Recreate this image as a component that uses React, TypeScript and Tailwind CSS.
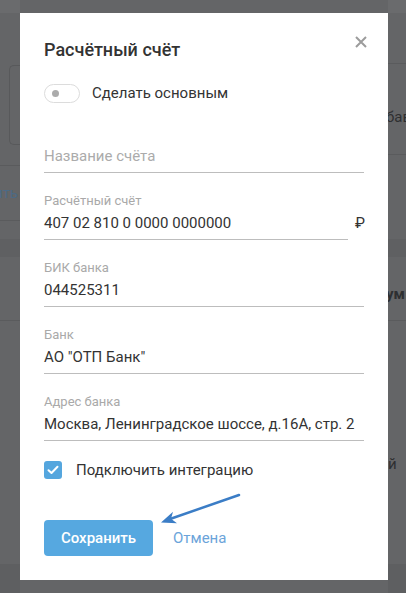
import React from "react";

function Field({ label, value }: { label: string; value: string }) {
  return (
    <div className="mt-[20px] border-b border-[#bdbdbd] pb-[6px]">
      <div className="text-[13px] leading-[16px] text-[#a9a9a9]">{label}</div>
      <div className="mt-[4px] text-[15px] leading-[20px] text-[#333333] whitespace-nowrap">{value}</div>
    </div>
  );
}

export default function App() {
  return (
    <div
      className="relative w-[406px] h-[593px] overflow-hidden bg-[#646567]"
      style={{ fontFamily: "Roboto, 'Noto Sans', Arial, sans-serif" }}
    >
      {/* background page (dimmed) */}
      <div className="flex h-full">
        <div className="w-[20px] flex flex-col overflow-hidden">
          <div className="h-[13px] bg-[#6a6b6d] shrink-0" />
          <div className="h-[52px] shrink-0" />
          <div className="ml-[9px] h-[80px] shrink-0 rounded-l-[5px] border border-r-0 border-[#58595b]" />
          <div className="h-[21px] shrink-0 border-b border-[#5a5b5d]" />
          <div className="h-[55px] shrink-0 border-b border-[#5a5b5d] flex items-center justify-end">
            <span className="text-[15px] text-[#4c6a85] whitespace-nowrap pr-[2px]">ить</span>
          </div>
          <div className="h-[18px] shrink-0" />
          <div className="h-[18px] shrink-0 bg-[#5f6062]" />
          <div className="h-[64px] shrink-0 border-b border-[#5a5b5d]" />
          <div className="flex-1" />
          <div className="h-[29px] shrink-0 bg-[#5e5f61]" />
        </div>
        <div className="flex-1" />
        <div className="w-[18px] flex flex-col overflow-hidden">
          <div className="h-[13px] bg-[#6a6b6d] shrink-0" />
          <div className="h-[51px] shrink-0 border-b border-[#5a5b5d]" />
          <div className="h-[91px] shrink-0 border-b border-[#5a5b5d] pt-[43px]">
            <span className="ml-[-2px] block text-[15px] leading-[20px] text-[#2e2f31] whitespace-nowrap">бав</span>
          </div>
          <div className="h-[84px] shrink-0" />
          <div className="h-[18px] shrink-0 bg-[#5f6062]" />
          <div className="h-[64px] shrink-0 border-b border-[#5a5b5d] pt-[27px]">
            <span className="ml-[-2px] block text-[15px] leading-[20px] font-bold text-[#2e2f31] whitespace-nowrap">ум</span>
          </div>
          <div className="h-[133px] shrink-0" />
          <div className="h-[20px] shrink-0">
            <span className="block text-[15px] leading-[20px] text-[#2e2f31]">й</span>
          </div>
          <div className="flex-1" />
          <div className="h-[29px] shrink-0 bg-[#5e5f61]" />
        </div>
      </div>

      {/* modal */}
      <div className="absolute left-[20px] top-[13px] w-[368px] h-[567px] bg-white px-[24px] pt-[25px]">
        <div className="text-[18px] leading-[24px] font-medium text-[#333333]">Расчётный счёт</div>
        <button className="absolute right-[21px] top-[23px] w-[12px] h-[12px]" aria-label="close">
          <svg width="12" height="12" viewBox="0 0 12 12">
            <path d="M1 1L11 11M11 1L1 11" stroke="#9c9c9c" strokeWidth="2" />
          </svg>
        </button>

        <div className="mt-[21px] h-[20px] flex items-center gap-[12px]">
          <div className="relative w-[36px] h-[19px] rounded-full border border-[#dcdcdc] bg-white">
            <div className="absolute left-[7px] top-[5px] w-[7px] h-[7px] rounded-full bg-[#ababab]" />
          </div>
          <span className="text-[15px] leading-[20px] text-[#333333]">Сделать основным</span>
        </div>

        <div className="mt-[43px] border-b border-[#bdbdbd] pb-[6px]">
          <div className="text-[15px] leading-[20px] text-[#ababab]">Название счёта</div>
        </div>

        <div className="flex">
          <div className="flex-1">
            <Field label="Расчётный счёт" value="407 02 810 0 0000 0000000" />
          </div>
          <div className="w-[16px] pt-[40px] pl-[7px] text-[15px] leading-[20px] text-[#333333]">₽</div>
        </div>
        <Field label="БИК банка" value="044525311" />
        <Field label="Банк" value={'АО "ОТП Банк"'} />
        <Field label="Адрес банка" value="Москва, Ленинградское шоссе, д.16А, стр. 2" />

        <div className="mt-[20px] h-[18px] flex items-center gap-[14px]">
          <div className="w-[18px] h-[18px] rounded-[3px] bg-[#55a6de] flex items-center justify-center">
            <svg width="12" height="10" viewBox="0 0 12 10">
              <path d="M1.5 5.2L4.5 8L10.5 1.8" stroke="white" strokeWidth="2" fill="none" strokeLinecap="round" strokeLinejoin="round" />
            </svg>
          </div>
          <span className="text-[15px] leading-[20px] text-[#333333]">Подключить интеграцию</span>
        </div>

        <div className="mt-[41px] flex items-center gap-[20px]">
          <button className="w-[109px] h-[36px] rounded-[4px] bg-[#56a8e0] text-white text-[15px] font-medium">
            Сохранить
          </button>
          <span className="text-[15px] leading-[20px] text-[#6ba4da]">Отмена</span>
        </div>
      </div>

      {/* annotation arrow */}
      <svg className="absolute left-0 top-0 pointer-events-none" width="406" height="593" viewBox="0 0 406 593">
        <line x1="239" y1="495" x2="170" y2="519" stroke="#3b7dc6" strokeWidth="2.5" strokeLinecap="round" />
        <polygon points="161,522.5 173,511.8 171,518.8 177,523.2" fill="#3b7dc6" />
      </svg>
    </div>
  );
}
